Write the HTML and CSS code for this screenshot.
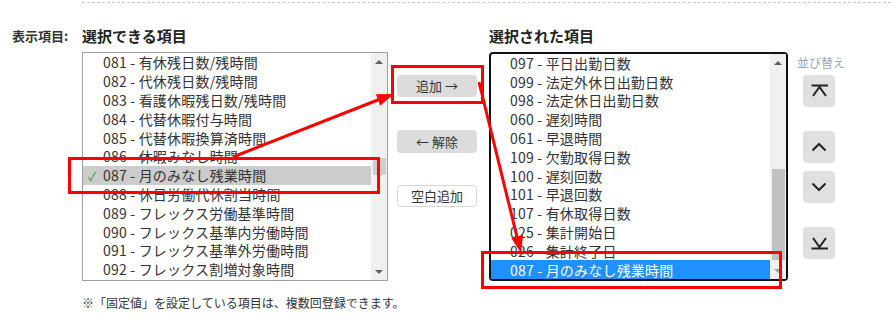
FILE: index.html
```html
<!DOCTYPE html>
<html lang="ja">
<head>
    <meta charset="UTF-8">
    <meta name="viewport" content="width=device-width, initial-scale=1.0">
    <title>表示項目の設定</title>
    <link rel="stylesheet" href="styles.css">
</head>
<body>
    <div class="page">
        <div class="divider"></div>

        <div class="field">
            <div class="field-label">表示項目:</div>

            <!-- available items -->
            <div class="col">
                <div class="col-title">選択できる項目</div>
                <div class="listbox">
                    <ul class="options">
                        <li class="option"><span class="mark"></span>081 - 有休残日数/残時間</li>
                        <li class="option"><span class="mark"></span>082 - 代休残日数/残時間</li>
                        <li class="option"><span class="mark"></span>083 - 看護休暇残日数/残時間</li>
                        <li class="option"><span class="mark"></span>084 - 代替休暇付与時間</li>
                        <li class="option"><span class="mark"></span>085 - 代替休暇換算済時間</li>
                        <li class="option"><span class="mark"></span>086 - 休暇みなし時間</li>
                        <li class="option current"><span class="mark">✓</span>087 - 月のみなし残業時間</li>
                        <li class="option"><span class="mark"></span>088 - 休日労働代休割当時間</li>
                        <li class="option"><span class="mark"></span>089 - フレックス労働基準時間</li>
                        <li class="option"><span class="mark"></span>090 - フレックス基準内労働時間</li>
                        <li class="option"><span class="mark"></span>091 - フレックス基準外労働時間</li>
                        <li class="option"><span class="mark"></span>092 - フレックス割増対象時間</li>
                    </ul>
                    <div class="scrollbar">
                        <span class="arrow up"></span>
                        <div class="track">
                            <span class="thumb" style="margin-top: 88px; height: 17px;"></span>
                        </div>
                        <span class="arrow down"></span>
                    </div>
                </div>
            </div>

            <!-- move buttons -->
            <div class="actions">
                <button type="button" class="btn btn-add">追加 →</button>
                <button type="button" class="btn btn-remove">← 解除</button>
                <button type="button" class="btn btn-blank">空白追加</button>
            </div>

            <!-- selected items -->
            <div class="col">
                <div class="col-title">選択された項目</div>
                <div class="listbox listbox-selected">
                    <ul class="options options-bottom">
                        <li class="option"><span class="mark"></span>097 - 平日出勤日数</li>
                        <li class="option"><span class="mark"></span>099 - 法定外休日出勤日数</li>
                        <li class="option"><span class="mark"></span>098 - 法定休日出勤日数</li>
                        <li class="option"><span class="mark"></span>060 - 遅刻時間</li>
                        <li class="option"><span class="mark"></span>061 - 早退時間</li>
                        <li class="option"><span class="mark"></span>109 - 欠勤取得日数</li>
                        <li class="option"><span class="mark"></span>100 - 遅刻回数</li>
                        <li class="option"><span class="mark"></span>101 - 早退回数</li>
                        <li class="option"><span class="mark"></span>107 - 有休取得日数</li>
                        <li class="option"><span class="mark"></span>025 - 集計開始日</li>
                        <li class="option"><span class="mark"></span>026 - 集計終了日</li>
                        <li class="option active"><span class="mark"></span>087 - 月のみなし残業時間</li>
                    </ul>
                    <div class="scrollbar">
                        <span class="arrow up"></span>
                        <div class="track">
                            <span class="thumb" style="margin-top: 98px; height: 91px;"></span>
                        </div>
                        <span class="arrow down disabled"></span>
                    </div>
                </div>
            </div>

            <!-- sort -->
            <div class="sort">
                <div class="sort-label">並び替え</div>
                <button type="button" class="sort-btn sort-top" title="先頭へ">
                    <svg viewBox="0 0 32 32" width="32" height="32"><path d="M8.5 10.5H25M10 21l6.5-9 6.5 9"/></svg>
                </button>
                <button type="button" class="sort-btn sort-up" title="上へ">
                    <svg viewBox="0 0 32 32" width="32" height="32"><path d="M9.5 19.5l6.5-6.5 6.5 6.5"/></svg>
                </button>
                <button type="button" class="sort-btn sort-down" title="下へ">
                    <svg viewBox="0 0 32 32" width="32" height="32"><path d="M9.5 12.5l6.5 6.5 6.5-6.5"/></svg>
                </button>
                <button type="button" class="sort-btn sort-bottom" title="末尾へ">
                    <svg viewBox="0 0 32 32" width="32" height="32"><path d="M10 11l6.5 9 6.5-9M8.5 21.5H25"/></svg>
                </button>
            </div>
        </div>

        <p class="note">※「固定値」を設定している項目は、複数回登録できます。</p>

        <!-- red annotation marks drawn over the form -->
        <svg class="annotations" viewBox="0 0 891 323" width="891" height="323">
            <g fill="none" stroke="#ff0000" stroke-width="3">
                <rect x="69.5" y="158.5" width="309" height="34"/>
                <rect x="392.5" y="66.5" width="90" height="36"/>
                <rect x="482.5" y="252.5" width="298" height="35"/>
                <line x1="233" y1="157" x2="379" y2="99.5"/>
                <line x1="479" y1="82" x2="517" y2="237"/>
            </g>
            <g fill="#ff0000">
                <polygon points="394,94 380.3,105.5 375.9,94.3"/>
                <polygon points="521,253 523.2,235.1 511.2,238.0"/>
            </g>
        </svg>
    </div>
</body>
</html>
```

FILE: styles.css
```css
body {
    margin: 0;
    font-family: "Noto Sans CJK JP", "Noto Sans", sans-serif;
    color: #333;
    background-color: #fff;
}

.page {
    position: relative;
    width: 891px;
    height: 323px;
    overflow: hidden;
}

.divider {
    margin: 2px 0 0 82px;
    border-top: 1px dashed #c8c8c8;
}

.field {
    display: flex;
    align-items: flex-start;
    margin-top: 23px;
}

.field-label {
    width: 82px;
    padding-left: 12px;
    box-sizing: border-box;
    font-size: 13px;
    font-weight: bold;
    line-height: 20px;
    color: #333;
}

.col-title {
    font-size: 15px;
    font-weight: bold;
    line-height: 20px;
    margin-bottom: 6px;
    color: #222;
}

/* list boxes */
.listbox {
    display: flex;
    width: 306px;
    height: 229px;
    border: 1px solid #a0a0a0;
    box-sizing: border-box;
    background-color: #fff;
}

.listbox-selected {
    width: 299px;
    border: 2px solid #111;
    border-radius: 4px;
}

.options {
    flex: 1;
    display: flex;
    flex-direction: column;
    list-style: none;
    margin: 0;
    padding: 0;
    overflow: hidden;
}

.options-bottom {
    justify-content: flex-end;
}

.option {
    display: flex;
    align-items: center;
    flex-shrink: 0;
    height: 18.8px;
    padding-left: 5px;
    font-size: 14px;
    letter-spacing: 0.2px;
    white-space: nowrap;
    color: #333;
}

.listbox-selected .option {
    padding-left: 4px;
}

.mark {
    width: 15px;
    flex-shrink: 0;
    font-size: 12px;
    color: #2e9e48;
}

.option.current {
    background-color: #cccccc;
}

.option.active {
    background-color: #1e90ff;
    color: #fff;
}

/* fake scrollbars */
.scrollbar {
    display: flex;
    flex-direction: column;
    width: 16px;
    background-color: #f0f0f0;
}

.track {
    flex: 1;
    display: flex;
    flex-direction: column;
    align-items: center;
}

.thumb {
    display: block;
    width: 13px;
    background-color: #cdcdcd;
}

.listbox-selected .thumb {
    background-color: #c1c1c1;
}

.arrow {
    display: flex;
    justify-content: center;
    align-items: center;
    height: 17px;
}

.arrow::before {
    content: "";
    border-left: 4px solid transparent;
    border-right: 4px solid transparent;
}

.arrow.up::before {
    border-bottom: 4px solid #606060;
}

.arrow.down::before {
    border-top: 4px solid #606060;
}

.arrow.down.disabled::before {
    border-top-color: #a3a3a3;
}

/* move buttons */
.actions {
    display: flex;
    flex-direction: column;
    width: 80px;
    margin-left: 9px;
    padding-top: 49px;
}

.btn {
    height: 22px;
    padding: 0;
    border: 1px solid transparent;
    border-radius: 4px;
    background-color: #dcdcdc;
    font-family: inherit;
    font-size: 13px;
    line-height: 20px;
    color: #333;
    cursor: pointer;
}

.btn-remove {
    margin-top: 33px;
    height: 23px;
}

.btn-blank {
    margin-top: 32px;
    background-color: #fff;
    border-color: #d8d8d8;
}

.col + .actions + .col {
    margin-left: 12px;
}

/* sort buttons */
.sort {
    display: flex;
    flex-direction: column;
    margin-left: 9px;
    padding-top: 28px;
}

.sort-label {
    font-size: 12px;
    line-height: 18px;
    color: #98a4b3;
}

.sort-btn {
    width: 32px;
    height: 32px;
    margin-left: 6px;
    padding: 0;
    border: none;
    border-radius: 4px;
    background-color: #e0e0e0;
    cursor: pointer;
}

.sort-btn svg {
    display: block;
    fill: none;
    stroke: #222;
    stroke-width: 2;
}

.sort-top {
    margin-top: 3px;
}

.sort-up {
    margin-top: 24px;
}

.sort-down {
    margin-top: 8px;
}

.sort-bottom {
    margin-top: 24px;
}

.note {
    margin: 13px 0 0 82px;
    font-size: 12px;
    line-height: 18px;
    color: #333;
}

.annotations {
    position: absolute;
    top: 0;
    left: 0;
    pointer-events: none;
}
```
